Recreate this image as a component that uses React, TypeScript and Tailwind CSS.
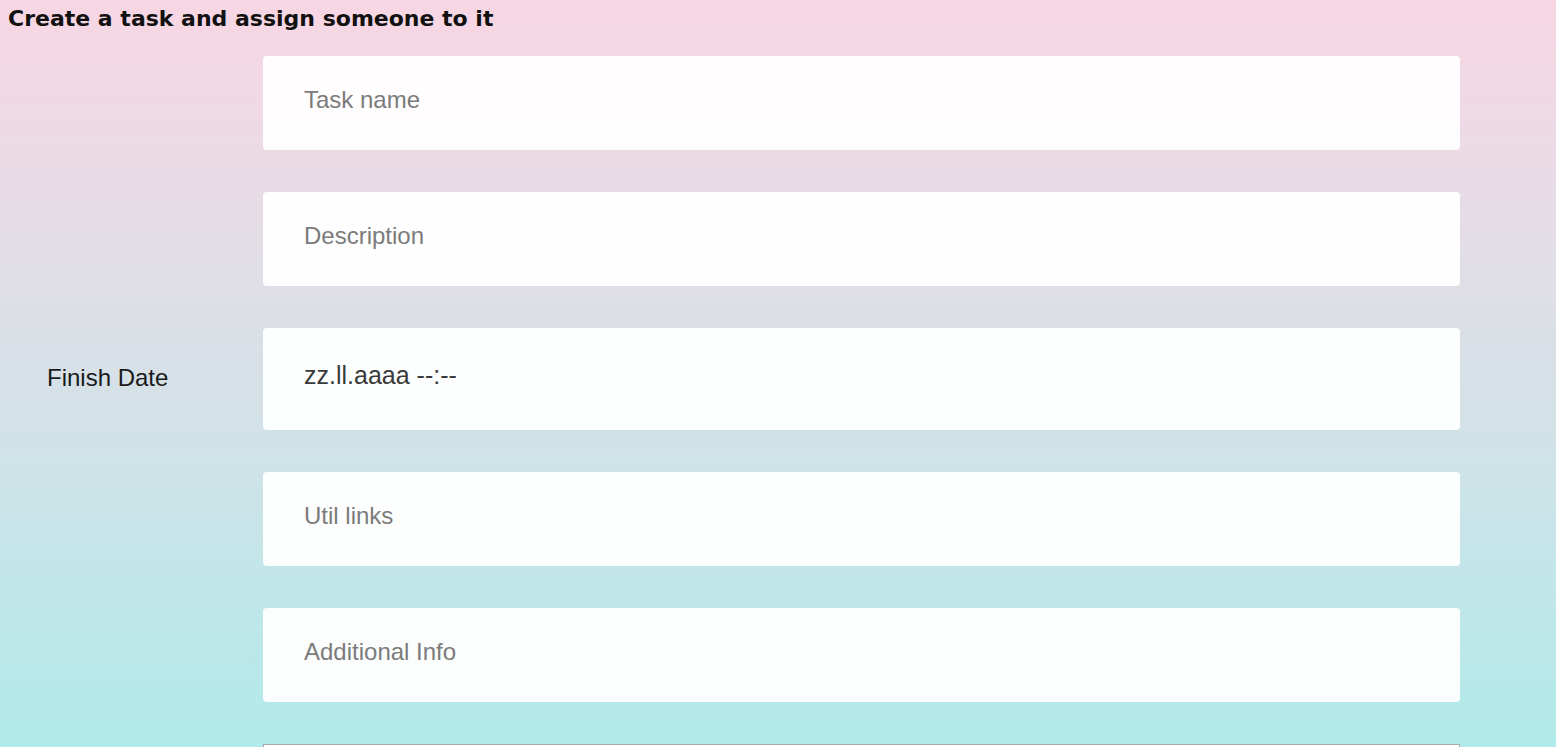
import React from "react"

const fields = [
  { key: "name", placeholder: "Task name" },
  { key: "desc", placeholder: "Description" },
]

const fieldsAfter = [
  { key: "links", placeholder: "Util links" },
  { key: "info", placeholder: "Additional Info" },
]

function Row({ label, children }: { label?: string; children: React.ReactNode }) {
  return (
    <div className="flex items-center">
      <div className="w-[263px] shrink-0 pb-[3px] pl-[47px] text-[24px] text-[#1a1a1a]">{label}</div>
      <div className="w-[1197px]">{children}</div>
    </div>
  )
}

function TextField({ placeholder }: { placeholder: string }) {
  return (
    <input
      type="text"
      placeholder={placeholder}
      className="h-[94px] w-full rounded-[4px] bg-white/95 px-[41px] pb-[6px] text-[24px] text-[#222] outline-none placeholder:text-[#7b7b7b]"
    />
  )
}

export default function App() {
  return (
    <div className="min-h-screen bg-fixed bg-gradient-to-b from-[#f8d6e4] to-[#b0eaea] font-['Liberation_Sans',Arial,sans-serif]">
      <h3 className="px-[8px] pt-[5px] text-[22px] font-bold leading-[28px] text-[#111] font-['DejaVu_Sans',sans-serif]">
        Create a task and assign someone to it
      </h3>
      <form className="flex flex-col gap-[42px] pt-[23px] pb-10">
        {fields.map((f) => (
          <Row key={f.key}>
            <TextField placeholder={f.placeholder} />
          </Row>
        ))}
        <Row label="Finish Date">
          <div className="flex h-[102px] w-full items-center rounded-[4px] bg-white/95 px-[41px] pb-[6px] text-[25px] text-[#3a3a3a]">
            zz.ll.aaaa --:--
          </div>
        </Row>
        {fieldsAfter.map((f) => (
          <Row key={f.key}>
            <TextField placeholder={f.placeholder} />
          </Row>
        ))}
        <Row>
          <select className="h-[40px] w-full border border-[#a9a9a9] bg-white px-2 text-[18px]">
            <option>Assign to</option>
          </select>
        </Row>
      </form>
    </div>
  )
}
